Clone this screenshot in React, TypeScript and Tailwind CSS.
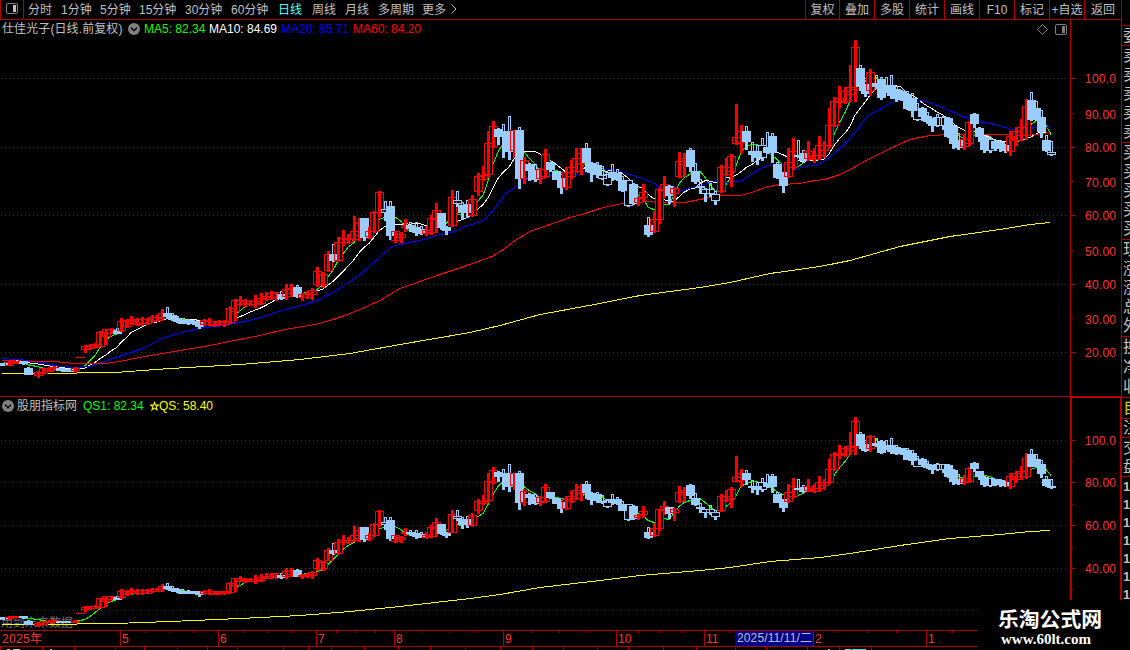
import React from "react";

type Kind = "r" | "b" | "h";
type Candle = [number, number, number, number, number, Kind];

// x, high, body top, body bottom, low, kind (r = rising, b = falling, h = falling with hollow body)
const CANDLES: Candle[] = [
  [4, 363, 363, 365, 365, "b"], [9, 361, 362, 365, 365, "r"], [14, 361, 361, 363, 363, "r"], [19, 360, 361, 362, 363, "r"],
  [23, 361, 361, 363, 364, "b"], [28, 367, 368, 374, 374, "b"], [38, 371, 372, 375, 377, "r"], [43, 368, 368, 373, 373, "r"],
  [49, 367, 368, 371, 371, "r"], [54, 366, 367, 370, 370, "r"], [60, 368, 368, 370, 370, "b"], [65, 369, 369, 371, 371, "b"],
  [70, 368, 369, 371, 371, "b"], [75, 367, 368, 370, 371, "r"],
  [85, 345, 346, 349, 352, "r"], [90, 344, 345, 348, 349, "r"], [95, 343, 344, 347, 347, "r"], [100, 331, 332, 346, 346, "r"],
  [106, 329, 329, 336, 344, "r"], [111, 328, 329, 333, 333, "r"], [117, 328, 330, 333, 333, "b"], [121, 318, 321, 330, 331, "r"],
  [127, 319, 320, 326, 327, "r"], [131, 316, 320, 323, 324, "r"], [137, 318, 319, 324, 325, "r"], [142, 317, 319, 323, 325, "r"],
  [147, 318, 319, 323, 324, "r"], [152, 315, 317, 320, 322, "r"], [157, 315, 317, 320, 321, "r"], [162, 309, 313, 318, 320, "r"],
  [167, 307, 313, 316, 318, "b"], [172, 313, 315, 319, 320, "b"], [177, 316, 318, 321, 322, "b"], [182, 318, 320, 323, 323, "b"],
  [188, 319, 320, 323, 324, "b"], [193, 320, 321, 323, 324, "b"], [199, 321, 322, 326, 328, "b"],
  [204, 319, 320, 324, 325, "r"], [209, 318, 321, 324, 325, "r"], [214, 321, 321, 325, 326, "r"], [219, 320, 322, 324, 325, "r"],
  [224, 320, 321, 324, 326, "r"], [230, 306, 308, 322, 323, "r"], [235, 299, 300, 311, 320, "r"], [240, 296, 300, 304, 305, "r"],
  [245, 299, 301, 303, 306, "r"], [250, 300, 301, 304, 305, "r"], [255, 295, 301, 304, 307, "r"], [261, 293, 298, 303, 304, "r"],
  [266, 292, 296, 299, 300, "r"], [271, 291, 293, 297, 299, "r"], [276, 292, 292, 297, 300, "r"], [281, 291, 294, 298, 299, "b"],
  [286, 284, 289, 296, 299, "r"], [291, 284, 288, 293, 296, "r"], [297, 285, 287, 296, 297, "b"], [302, 293, 294, 297, 300, "r"],
  [307, 291, 293, 297, 298, "r"], [312, 288, 290, 294, 299, "r"], [317, 267, 271, 284, 286, "r"], [323, 272, 274, 284, 287, "r"],
  [328, 251, 254, 270, 271, "r"], [333, 244, 254, 260, 261, "b"], [338, 237, 242, 260, 261, "r"], [343, 230, 238, 242, 245, "r"],
  [348, 234, 239, 242, 243, "r"], [354, 216, 231, 239, 240, "r"], [359, 218, 223, 235, 240, "r"], [364, 218, 218, 237, 240, "b"],
  [369, 227, 231, 236, 238, "r"], [374, 211, 212, 231, 232, "r"], [379, 191, 192, 212, 216, "r"], [385, 201, 209, 212, 220, "h"],
  [390, 201, 206, 235, 239, "b"], [395, 231, 231, 240, 242, "r"], [401, 232, 234, 237, 242, "r"], [405, 219, 225, 227, 231, "r"],
  [410, 222, 225, 228, 231, "b"], [416, 222, 227, 232, 235, "b"], [421, 226, 229, 233, 234, "b"], [426, 226, 230, 233, 235, "r"],
  [431, 215, 218, 232, 234, "r"], [436, 203, 210, 219, 232, "r"], [441, 213, 213, 227, 229, "b"], [446, 226, 227, 230, 234, "b"],
  [452, 190, 197, 225, 226, "r"], [457, 191, 200, 203, 206, "h"], [462, 202, 205, 212, 219, "b"], [467, 200, 204, 212, 217, "b"],
  [472, 195, 199, 215, 216, "r"], [478, 173, 176, 191, 195, "r"], [483, 166, 175, 179, 180, "r"], [488, 131, 143, 174, 177, "r"],
  [493, 121, 126, 146, 147, "r"], [498, 128, 129, 136, 144, "b"], [503, 124, 131, 136, 157, "b"], [509, 116, 131, 151, 159, "b"],
  [514, 130, 130, 150, 157, "r"], [519, 127, 130, 178, 188, "b"], [524, 157, 160, 178, 183, "r"], [529, 163, 164, 170, 180, "b"],
  [535, 164, 170, 179, 181, "b"], [540, 168, 169, 178, 183, "r"], [545, 149, 154, 176, 177, "r"], [550, 162, 162, 169, 171, "b"],
  [556, 171, 171, 179, 179, "b"], [561, 174, 178, 187, 193, "b"], [566, 167, 172, 187, 189, "r"], [571, 160, 167, 176, 178, "r"],
  [576, 148, 158, 171, 172, "r"], [581, 148, 153, 163, 174, "r"], [586, 143, 148, 162, 171, "b"], [591, 162, 163, 172, 181, "b"],
  [597, 162, 165, 174, 177, "b"], [602, 166, 175, 178, 179, "h"], [607, 172, 174, 184, 185, "h"], [612, 164, 172, 177, 180, "b"],
  [617, 169, 173, 179, 180, "b"], [622, 176, 180, 190, 191, "b"], [628, 180, 180, 205, 206, "h"], [633, 183, 184, 203, 204, "b"],
  [638, 197, 198, 202, 205, "r"], [643, 184, 192, 197, 201, "r"], [648, 217, 225, 234, 236, "b"], [654, 211, 219, 231, 232, "r"],
  [659, 188, 189, 219, 223, "r"], [664, 176, 184, 190, 197, "r"], [669, 185, 186, 195, 203, "b"], [674, 187, 188, 193, 206, "r"],
  [679, 152, 161, 176, 177, "r"], [684, 153, 158, 164, 176, "r"], [690, 148, 150, 166, 171, "b"], [695, 163, 171, 181, 183, "b"],
  [700, 179, 186, 187, 193, "b"], [705, 188, 189, 193, 201, "h"], [710, 183, 189, 193, 196, "h"], [715, 191, 194, 200, 204, "h"],
  [721, 165, 167, 191, 192, "r"], [726, 158, 167, 174, 175, "r"], [731, 154, 156, 171, 186, "r"], [736, 104, 137, 143, 144, "r"],
  [741, 125, 131, 142, 152, "r"], [746, 126, 131, 141, 149, "b"], [752, 142, 151, 154, 161, "b"], [757, 145, 151, 157, 164, "b"],
  [762, 138, 145, 157, 160, "h"], [767, 132, 147, 152, 153, "b"], [772, 133, 136, 152, 162, "b"], [777, 162, 164, 177, 178, "b"],
  [783, 172, 172, 185, 192, "b"], [788, 148, 162, 176, 177, "r"], [793, 138, 151, 167, 169, "r"], [798, 140, 155, 156, 157, "b"],
  [803, 150, 153, 160, 162, "b"], [808, 141, 151, 158, 160, "r"], [814, 148, 155, 159, 162, "r"], [819, 136, 145, 155, 159, "r"],
  [824, 141, 145, 150, 157, "r"], [829, 108, 125, 145, 147, "r"], [834, 97, 101, 125, 126, "r"], [839, 86, 98, 102, 107, "r"],
  [845, 87, 91, 101, 103, "r"], [850, 65, 87, 94, 101, "r"], [855, 40, 47, 89, 101, "r"], [860, 65, 68, 86, 90, "b"],
  [865, 78, 84, 93, 96, "b"], [870, 69, 72, 90, 95, "r"], [876, 75, 83, 86, 88, "b"], [881, 77, 79, 97, 99, "b"],
  [886, 77, 86, 91, 92, "b"], [891, 75, 85, 95, 98, "b"], [896, 86, 89, 98, 101, "b"], [901, 90, 91, 99, 100, "b"],
  [907, 91, 94, 108, 109, "b"], [912, 93, 98, 110, 116, "b"], [917, 103, 109, 119, 120, "h"], [922, 107, 108, 116, 120, "b"],
  [927, 112, 116, 121, 123, "b"], [932, 118, 118, 125, 131, "b"], [937, 114, 117, 125, 126, "h"], [943, 116, 117, 125, 129, "h"],
  [948, 117, 118, 136, 137, "b"], [953, 125, 126, 143, 148, "b"], [958, 133, 140, 147, 149, "b"],
  [964, 134, 139, 146, 149, "r"], [969, 121, 122, 143, 145, "r"], [974, 113, 114, 123, 127, "b"], [979, 127, 128, 136, 141, "b"],
  [984, 136, 137, 149, 152, "b"], [990, 138, 139, 150, 152, "h"], [995, 140, 141, 148, 150, "b"], [1000, 140, 142, 148, 151, "b"],
  [1005, 144, 145, 150, 152, "b"], [1010, 131, 136, 151, 155, "r"], [1016, 127, 131, 140, 145, "r"], [1021, 119, 127, 135, 140, "r"],
  [1026, 99, 106, 135, 139, "r"], [1031, 92, 100, 119, 120, "b"], [1036, 101, 108, 119, 120, "b"], [1041, 110, 117, 131, 137, "b"],
  [1046, 135, 140, 150, 151, "b"], [1051, 141, 152, 154, 155, "h"],
];

type Pt = [number, number];

const MA20: Pt[] = [
  [2, 358], [30, 360], [45, 363], [60, 366], [75, 367], [90, 366], [110, 359], [125, 354], [140, 349], [155, 342], [165, 337], [185, 331], [205, 327],
  [225, 325], [245, 321], [265, 316], [285, 309], [305, 304], [320, 299], [335, 291], [345, 284], [355, 278], [365, 270], [375, 261],
  [385, 252], [392, 246], [400, 244], [420, 240], [440, 234], [455, 231], [465, 226], [475, 223], [485, 219], [492, 211], [500, 201],
  [507, 192], [515, 187], [524, 180], [535, 177], [550, 175], [565, 175], [580, 174], [590, 171], [600, 169], [610, 169], [620, 171],
  [640, 177], [655, 183], [662, 190], [670, 192], [682, 190], [700, 185], [715, 181], [725, 182], [740, 181], [750, 175], [760, 168],
  [770, 165], [782, 164], [795, 169], [805, 166], [818, 164], [828, 158], [839, 149], [848, 140], [858, 128], [868, 115], [878, 110],
  [890, 103], [900, 99], [912, 98], [930, 102], [945, 108], [960, 115], [975, 120], [995, 124], [1012, 129], [1025, 129], [1040, 126], [1050, 127],
];

const MA60: Pt[] = [
  [2, 360], [30, 361], [55, 361], [75, 363], [105, 363], [120, 361], [150, 355], [180, 350], [210, 345], [240, 339], [260, 335],
  [285, 329], [315, 324], [330, 320], [345, 315], [360, 309], [380, 300], [400, 288], [420, 281], [440, 274], [470, 264], [492, 256], [505, 248],
  [515, 240], [530, 231], [550, 224], [570, 217], [585, 213], [600, 208], [612, 205], [623, 203], [645, 201], [660, 202], [685, 202],
  [700, 199], [720, 195], [740, 195], [752, 192], [765, 187], [780, 184], [800, 183], [815, 180], [825, 179], [840, 174], [850, 169],
  [870, 158], [890, 148], [910, 139], [930, 135], [950, 134], [1010, 134], [1035, 134], [1050, 132],
];

const MA250: Pt[] = [
  [2, 373], [40, 373], [115, 372], [170, 368], [240, 364], [300, 359], [350, 353], [400, 344], [470, 332], [500, 325], [540, 314],
  [600, 303], [640, 295], [700, 287], [730, 282], [770, 273], [820, 266], [850, 260], [900, 246], [950, 236], [1000, 229],
  [1030, 224], [1050, 222],
];

function average(n: number, lead: number): Pt[] {
  const closes = CANDLES.map((c) => (c[5] === "r" ? c[2] : c[3]));
  return CANDLES.map((c, i) => {
    let sum = 0;
    for (let k = 0; k < n; k++) sum += i - k >= 0 ? closes[i - k] : lead;
    return [c[0], sum / n] as Pt;
  });
}

const MA5 = average(5, 361);
const MA10 = average(10, 359);

const mainScale = (y: number) => y;
const subScale = (y: number) => Math.round(440.5 + (y - 78.5) * 0.622);

function Line({ pts, scale, color }: { pts: Pt[]; scale: (y: number) => number; color: string }) {
  return (
    <polyline
      points={pts.map(([x, y]) => `${x},${scale(y) + 0.5}`).join(" ")}
      fill="none"
      stroke={color}
      strokeWidth={1}
      shapeRendering="crispEdges"
    />
  );
}

function Candles({ scale }: { scale: (y: number) => number }) {
  const shapes = CANDLES.map(([x, hi, top, bot, lo, kind]) => {
    const h = scale(hi);
    const t = scale(top);
    const b = Math.max(scale(bot), t + 1);
    const l = Math.max(scale(lo), b);
    return { x, h, t, b, l, kind, color: kind === "r" ? "#ff0000" : "#99ccff" };
  });
  return (
    <g shapeRendering="crispEdges">
      {shapes.map((s) => (
        <rect key={s.x} x={s.x - 4} y={s.t} width={9} height={s.b - s.t + 1} fill="#000" />
      ))}
      {shapes.map(({ x, h, t, b, l, kind, color }) => (
        <g key={x}>
          <rect x={x - 3.5} y={t + 0.5} width={8} height={b - t} fill={kind === "b" ? color : "none"} stroke={color} />
          {kind === "r" && <rect x={x - 1} y={h} width={3} height={l - h + 1} fill={color} />}
          {kind !== "r" && t > h && <rect x={x - 0.5} y={h + 0.5} width={2} height={t - h} fill="none" stroke={color} />}
          {kind !== "r" && <rect x={x - 1} y={b} width={3} height={l - b + 1} fill={color} />}
        </g>
      ))}
    </g>
  );
}

function Grid({ ys }: { ys: number[] }) {
  return (
    <g shapeRendering="crispEdges">
      {ys.map((y) => (
        <line key={y} x1={1} x2={1068} y1={y + 0.5} y2={y + 0.5} stroke="#a01010" strokeDasharray="1 3" />
      ))}
    </g>
  );
}

function Scale({ labels, major, minor }: { labels: [string, number][]; major: number[]; minor: number[] }) {
  return (
    <g>
      <g shapeRendering="crispEdges" fill="#b00000">
        {major.map((y) => <rect key={y} x={1070} y={y} width={6} height={1} />)}
        {minor.map((y) => <rect key={y} x={1070} y={y} width={3} height={1} />)}
      </g>
      {labels.map(([t, y]) => (
        <text key={t} x={1116} y={y + 5} textAnchor="end" fill="#ff3232" fontSize={12} textLength={31} lengthAdjust="spacing">
          {t}
        </text>
      ))}
    </g>
  );
}

const Chevron = () => (
  <svg className="size-3 shrink-0" viewBox="0 0 12 12">
    <circle cx="6" cy="6" r="6" fill="#808080" />
    <path d="M3 4.6 6 7.6 9 4.6" fill="none" stroke="#111" strokeWidth="1.5" />
  </svg>
);

const PERIODS: [string, string][] = [
  ["分时", "w-[33px]"], ["1分钟", "w-[39px]"], ["5分钟", "w-[39px]"], ["15分钟", "w-[46px]"], ["30分钟", "w-[46px]"],
  ["60分钟", "w-[47px]"], ["日线", "w-[34px]"], ["周线", "w-[33px]"], ["月线", "w-[33px]"], ["多周期", "w-[44px]"], ["更多", "w-[28px]"],
];

const ACTIONS: [string, string][] = [
  ["复权", "w-[34px]"], ["叠加", "w-[35px]"], ["多股", "w-[35px]"], ["统计", "w-[35px]"], ["画线", "w-[35px]"],
  ["F10", "w-[35px]"], ["标记", "w-[35px]"], ["+自选", "w-[35px]"], ["返回", "w-[37px]"],
];

const STRIP: { h: string; step: string; items: string[]; cls: string }[] = [
  { h: "h-[20px]", step: "h-[19px]", items: ["委"], cls: "text-[#c0c0c0]" },
  { h: "h-[97px]", step: "h-[19px]", items: ["卖", "卖", "卖", "卖", "卖"], cls: "text-[#c0c0c0]" },
  { h: "h-[97px]", step: "h-[19px]", items: ["买", "买", "买", "买", "买"], cls: "text-[#c0c0c0]" },
  { h: "h-[97px]", step: "h-[19px]", items: ["现", "涨", "涨", "总", "外"], cls: "text-[#c0c0c0]" },
  { h: "h-[61px]", step: "h-[20px]", items: ["换", "净", "收"], cls: "text-[#c0c0c0]" },
  { h: "h-[21px]", step: "h-[20px]", items: ["自"], cls: "text-[#d8d800]" },
  { h: "h-[19px]", step: "h-[18px]", items: ["注"], cls: "text-[#c0c0c0]" },
  { h: "h-[39px]", step: "h-[19px]", items: ["交", "盘"], cls: "text-[#c0c0c0]" },
];

const MONTHS: [string, number][] = [["5", 120], ["6", 218], ["7", 316], ["8", 394], ["9", 503], ["10", 616], ["11", 704], ["2", 813], ["1", 926]];
const WEEKS = [145, 169, 194, 243, 267, 292, 336, 355, 375, 421, 449, 476, 531, 559, 588, 638, 660, 682, 730, 837, 867, 896, 952];
const FOOT = [0, 42, 74, 115, 144, 177, 207, 237, 283, 308, 331, 364, 398, 430, 465, 500, 532, 563, 597, 628, 663, 696, 735, 766, 807, 839, 871];

export default function App() {
  return (
    <div className="flex h-[650px] w-[1130px] overflow-hidden bg-black text-[12px] leading-none text-[#c0c0c0] [font-family:'Liberation_Sans','Noto_Sans_CJK_SC',sans-serif]">
      <div className="flex w-[1121px] shrink-0 flex-col">
        <div className="flex h-[20px] shrink-0 items-stretch border-b border-[#b00000] whitespace-nowrap">
          <div className="mr-[4px] flex w-[24px] items-center justify-center border-x border-[#b00000] pt-[0px] pb-[3px]">
            <svg className="h-[11px] w-[12px]" viewBox="0 0 12 11">
              <rect x="0.5" y="0.5" width="11" height="10" rx="1.5" fill="none" stroke="#808080" />
              <rect x="7" y="2" width="3" height="7" fill="#c0c0c0" />
            </svg>
          </div>
          {PERIODS.map(([t, w]) => (
            <span key={t} className={`${w} flex shrink-0 items-center ${t === "日线" ? "text-[#54ffff]" : ""}`}>{t}</span>
          ))}
          <svg className="mt-[4px] h-[10px] w-[7px]" viewBox="0 0 7 10">
            <path d="M1.5 0.5 6 5 1.5 9.5" fill="none" stroke="#c0c0c0" />
          </svg>
          <div className="ml-auto flex">
            {ACTIONS.map(([t, w]) => (
              <span key={t} className={`${w} flex items-center justify-center border-l border-[#b00000]`}>{t}</span>
            ))}
          </div>
        </div>

        <div className="relative h-[377px] shrink-0 border-b border-[#b00000]">
          <svg className="block h-[376px] w-[1121px]" viewBox="0 20 1121 376">
            <Grid ys={[78, 147, 215, 284, 352]} />
            <Line pts={MA5} scale={mainScale} color="#00ff00" />
            <Line pts={MA10} scale={mainScale} color="#ffffff" />
            <Line pts={MA20} scale={mainScale} color="#0000ff" />
            <Line pts={MA60} scale={mainScale} color="#ff0000" />
            <Line pts={MA250} scale={mainScale} color="#ffff00" />
            <rect x="76" y="357" width="9" height="1" fill="#f00" />
            <Candles scale={mainScale} />
            <rect x="1070" y="20" width="1" height="376" fill="#b00000" />
            <Scale
              labels={[["100.0", 78], ["90.00", 114], ["80.00", 147], ["70.00", 182], ["60.00", 215], ["50.00", 251], ["40.00", 284], ["30.00", 319], ["20.00", 352]]}
              major={[78, 147, 215, 284, 352]}
              minor={[113, 181, 250, 318]}
            />
          </svg>
          <div className="absolute top-0 left-[2px] flex h-[18px] items-center whitespace-nowrap">
            <span className="w-[126px] tracking-[0.1px]">仕佳光子(日线.前复权)</span>
            <Chevron />
            <span className="ml-[4px] w-[65px] text-[#00ff00]">MA5: 82.34</span>
            <span className="w-[72px] text-white">MA10: 84.69</span>
            <span className="w-[72px] text-[#0000ff]">MA20: 85.71</span>
            <span className="text-[#ff0000]">MA60: 84.20</span>
          </div>
          <div className="absolute top-[4px] left-[1037px] flex items-start gap-[7px]">
            <svg className="h-[11px] w-[11px]" viewBox="0 0 11 11">
              <path d="M5.5 0.5 10.5 5.5 5.5 10.5 0.5 5.5Z" fill="none" stroke="#808080" />
            </svg>
            <svg className="h-[11px] w-[12px]" viewBox="0 0 12 11">
              <rect x="0.5" y="0.5" width="11" height="10" rx="1.5" fill="none" stroke="#808080" />
              <rect x="7" y="2" width="3" height="7" fill="#808080" />
            </svg>
          </div>
        </div>

        <div className="relative h-[253px] shrink-0">
          <svg className="block h-[253px] w-[1121px]" viewBox="0 397 1121 253">
            <Grid ys={[440, 482, 525, 568, 610]} />
            <text x="1" y="627" fontSize="12" fill="#707070">用到未来数据</text>
            <Line pts={MA5} scale={subScale} color="#00ff00" />
            <Line pts={MA250} scale={subScale} color="#ffff00" />
            <rect x="76" y="613" width="9" height="1" fill="#f00" />
            <Candles scale={subScale} />
            <g fill="#b00000" shapeRendering="crispEdges">
              <rect x="1070" y="397" width="51" height="1" />
              <rect x="1070" y="397" width="2" height="203" />
              <rect x="1120" y="397" width="1" height="203" />
              <rect x="0" y="630" width="978" height="1" />
              <rect x="0" y="646" width="978" height="1" />
              {MONTHS.map(([t, x]) => <rect key={t} x={x} y={630} width={1} height={16} />)}
              {WEEKS.map((x) => <rect key={x} x={x} y={631} width={1} height={2} />)}
              {FOOT.map((x) => <rect key={x} x={x} y={647} width={1} height={3} />)}
            </g>
            <Scale
              labels={[["100.0", 440], ["80.00", 482], ["60.00", 525], ["40.00", 568]]}
              major={[440, 482, 525, 568]}
              minor={[461, 504, 547, 589]}
            />
            <text x="2" y="643" fontSize="12" fill="#ff3232" textLength="40">2025年</text>
            {MONTHS.map(([t, x]) => <text key={t} x={x + 2} y={643} fontSize={12} fill="#ff3232">{t}</text>)}
            <rect x="735" y="631" width="78" height="15" fill="#000088" />
            <text x="737" y="642" fontSize="12" fill="#c0c0c0" textLength="75">2025/11/11/二</text>
            <path d="M7 649.5h3M13 649.5h7M50 649.5h2M828 649.5h2M845 649.5h6" stroke="#c0c0c0" />
            <path d="M852 649.5h14" stroke="#54dddd" />
          </svg>
          <div className="absolute top-0 left-[2px] flex h-[17px] items-center whitespace-nowrap">
            <Chevron />
            <span className="ml-[3px] w-[66px]">股朋指标网</span>
            <span className="w-[67px] text-[#00ff00]">QS1: 82.34</span>
            <svg className="h-[10px] w-[9px]" viewBox="0 0 10 10">
              <path d="M5 1 6.1 4H9.4L6.8 6 7.8 9.3 5 7.3 2.2 9.3 3.2 6 0.6 4H3.9Z" fill="none" stroke="#ffff00" strokeWidth="1.2" />
            </svg>
            <span className="text-[#ffff00]">QS: 58.40</span>
          </div>
          <div className="absolute top-[203px] left-[978px] h-[50px] w-[152px] bg-black text-white">
            <div className="pt-[10px] pl-[20px] text-[20.8px] leading-[20px] font-bold whitespace-nowrap">乐淘公式网</div>
            <div className="pt-[2px] pl-[23px] text-[15px] leading-[15px] font-bold whitespace-nowrap [font-family:'Liberation_Serif',serif]">www.60lt.com</div>
          </div>
        </div>
      </div>

      <div className="flex h-[600px] w-[9px] shrink-0 flex-col overflow-hidden border-l border-[#b00000] text-[16px]">
        <div className="h-[26px] shrink-0 border-b border-[#b00000]" />
        {STRIP.map((s, i) => (
          <div key={i} className={`${s.h} ${s.cls} flex shrink-0 flex-col overflow-hidden border-b border-[#b00000] pl-[1px]`}>
            {s.items.map((t, k) => (
              <span key={k} className={`${s.step} flex w-[18px] shrink-0 items-center`}>{t}</span>
            ))}
          </div>
        ))}
        <div className="flex flex-col pl-[1px] text-[13px] font-bold">
          {[0, 1, 2, 3, 4, 5, 6].map((i) => (
            <span key={i} className="flex h-[18px] items-center">1</span>
          ))}
        </div>
      </div>
    </div>
  );
}
